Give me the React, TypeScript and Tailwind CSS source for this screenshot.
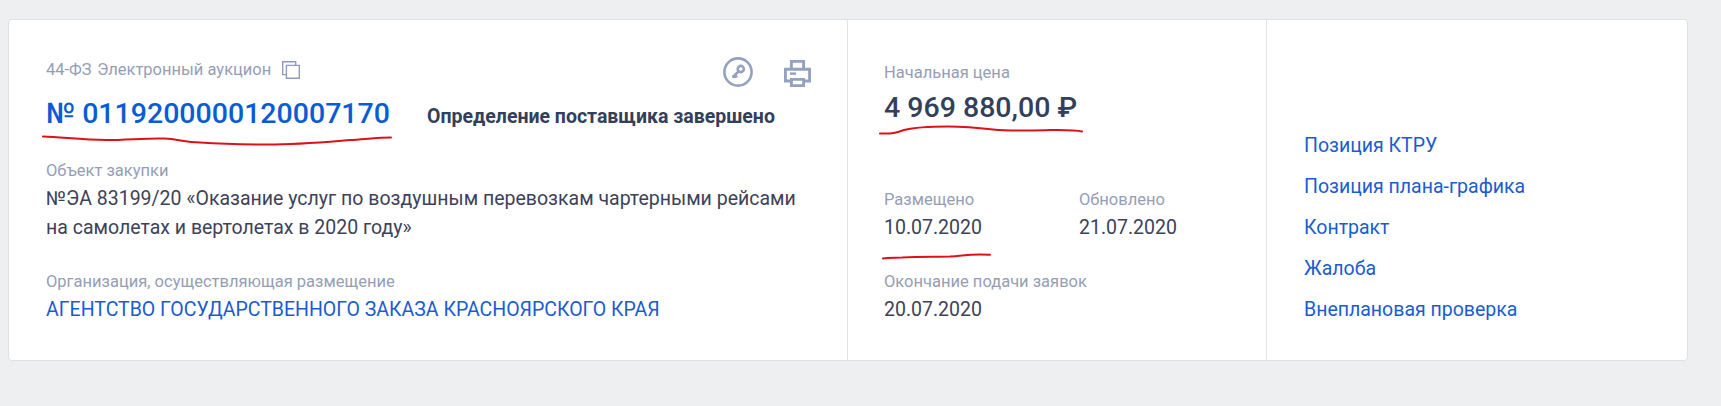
const dates = [
  { label: "Размещено", value: "10.07.2020" },
  { label: "Обновлено", value: "21.07.2020" },
];

const links = [
  "Позиция КТРУ",
  "Позиция плана-графика",
  "Контракт",
  "Жалоба",
  "Внеплановая проверка",
];

function Label({ children }: { children: React.ReactNode }) {
  return (
    <div className="h-6 text-[16.5px] leading-[25px] whitespace-nowrap text-[#959eb5]">
      {children}
    </div>
  );
}

function CopyIcon() {
  return (
    <svg className="ml-[11px] mt-1 size-[18px]" viewBox="0 0 18 18" fill="none" stroke="#8f9cba" strokeWidth="1.4">
      <path d="M4 13.6H.7V.7h13V4" />
      <path d="M4.4 4.4h12.9v12.9H4.4z" />
    </svg>
  );
}

function KeyIcon() {
  return (
    <svg className="size-[30px]" viewBox="0 0 30 30" fill="none" stroke="#94a1bf">
      <circle cx="15" cy="15" r="13.6" strokeWidth="2.6" />
      <circle cx="17.8" cy="12" r="3.1" strokeWidth="2.6" />
      <path d="M15.8 14.2 9.6 20.2M11.4 17.8l2.6 2.6M9.2 19.6h4" strokeWidth="2.6" />
    </svg>
  );
}

function PrinterIcon() {
  return (
    <svg className="mt-[3px] size-[27px]" viewBox="0 0 27 27" fill="none" stroke="#94a1bf" strokeWidth="2.9">
      <path d="M7.4 9V1.4h12.2V9" />
      <path d="M7.4 21H1.4V9.2h24.2V21h-6" />
      <path d="M7.4 19.4h12.2v6.2H7.4z" />
      <path d="M6 13.6h6" strokeWidth="2.4" />
    </svg>
  );
}

export default function App() {
  return (
    <div className="relative h-[406px] bg-[#eeeff1] pt-[19px] pl-2 font-[Roboto,sans-serif] text-[19.5px] leading-[29px] text-[#3d4259]">
      <div className="flex h-[342px] w-[1680px] rounded border border-[#dde1e6] bg-white">
        <section className="w-[839px] border-r border-[#e1e5ea] pt-[37px] pr-[35px] pl-[37px]">
          <div className="flex h-6 justify-between">
            <div className="flex">
              <Label>
                <span className="mr-[1.5px]">44-ФЗ</span> Электронный аукцион
              </Label>
              <CopyIcon />
            </div>
            <div className="mr-px flex gap-[31px]">
              <KeyIcon />
              <PrinterIcon />
            </div>
          </div>
          <div className="mt-[14px] flex items-baseline whitespace-nowrap">
            <a href="#" className="w-[381px] text-[28.5px] leading-[37px] font-medium text-[#0a5cd5]">
              № 0119200000120007170
            </a>
            <span className="font-bold text-[#334059]">Определение поставщика завершено</span>
          </div>
          <div className="mt-[26px]">
            <Label>Объект закупки</Label>
            <div className="mt-0.5 whitespace-nowrap">
              №ЭА 83199/20 «Оказание услуг по воздушным перевозкам чартерными рейсами
              <br />
              на самолетах и вертолетах в 2020 году»
            </div>
          </div>
          <div className="mt-[27px]">
            <Label>Организация, осуществляющая размещение</Label>
            <a href="#" className="mt-0.5 block whitespace-nowrap text-[#1a5ccf]">
              АГЕНТСТВО ГОСУДАРСТВЕННОГО ЗАКАЗА КРАСНОЯРСКОГО КРАЯ
            </a>
          </div>
        </section>

        <section className="w-[419px] border-r border-[#e1e5ea] pt-10 pl-9">
          <Label>Начальная цена</Label>
          <div className="mt-[5px] text-[28.5px] leading-[37px] font-medium whitespace-nowrap text-[#334059]">
            4 969 880,00 ₽
          </div>
          <div className="mt-[61px] grid grid-cols-[195px_1fr]">
            {dates.map((d) => (
              <div key={d.label}>
                <Label>{d.label}</Label>
                <div className="mt-0.5">{d.value}</div>
              </div>
            ))}
          </div>
          <div className="mt-[27px]">
            <Label>Окончание подачи заявок</Label>
            <div className="mt-0.5">20.07.2020</div>
          </div>
        </section>

        <nav className="flex flex-1 flex-col gap-3 pt-[111px] pl-[37px] text-[#1a5ccf]">
          {links.map((link) => (
            <a key={link} href="#">
              {link}
            </a>
          ))}
        </nav>
      </div>

      {/* hand-drawn red underlines */}
      <svg
        className="pointer-events-none absolute inset-0 h-[406px] w-[1721px]"
        viewBox="0 0 1721 406"
        fill="none"
        stroke="#dc1219"
        strokeWidth="2"
        strokeLinecap="round"
      >
        <path d="M43 136.5C62 137 82 140 106 140C128 140 145 138 164 138.5C178 139 184 142 200 142.5C222 144 245 144.5 268 144.5C298 144.5 325 142 350 140C366 139 380 137.5 391 137.5" />
        <path d="M880 133.5C892 134 896 133 904 130C918 126.5 932 126.5 948 126.5C966 126.5 980 128 993 129.5C1012 131.5 1034 130.5 1050 130C1064 129.8 1076 129.8 1082 131.5" />
        <path d="M883 258.5C887 257.5 894 257.8 902 257.5C918 256.5 930 256.8 950 256.5C964 255.8 970 253.5 990 254.8" />
      </svg>
    </div>
  );
}
